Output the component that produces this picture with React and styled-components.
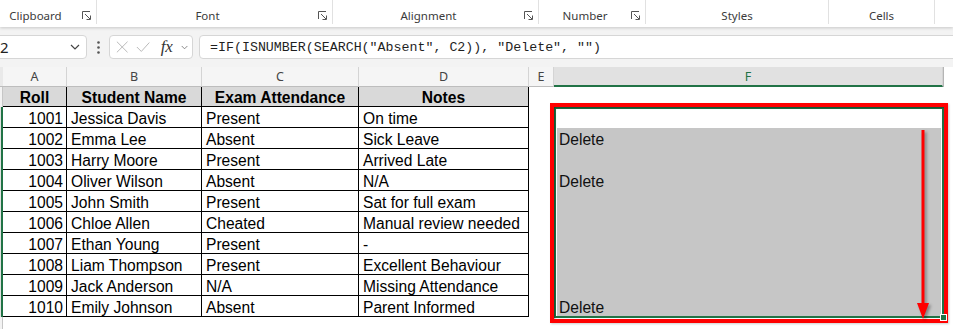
import React from 'react';
import styled, { createGlobalStyle } from 'styled-components';

const GlobalStyle = createGlobalStyle`
  html, body {
    margin: 0;
    padding: 0;
    background: #fff;
    overflow: hidden;
  }
  body {
    font-family: "Liberation Sans", Arial, sans-serif;
  }
`;

const GREEN = '#217346';

const Page = styled.div`
  width: 953px;
  height: 329px;
  display: flex;
  flex-direction: column;
  overflow: hidden;
`;

/* ---------- ribbon ---------- */

const Ribbon = styled.div`
  height: 27px;
  flex-shrink: 0;
  display: flex;
  background: #fff;
  box-shadow: 0 1px 3px rgba(0, 0, 0, 0.18);
  position: relative;
  z-index: 1;
`;

const Group = styled.div`
  width: ${p => p.$w}px;
  margin-left: ${p => p.$offset || 0}px;
  height: 24px;
  flex-shrink: 0;
  display: flex;
  align-items: flex-end;
  box-sizing: border-box;
  border-right: 1px solid #e1e1e1;
`;

const GroupLabel = styled.div`
  flex: 1;
  text-align: center;
  font-family: "Noto Sans", "Open Sans", sans-serif;
  font-size: 11.5px;
  line-height: 14px;
  color: #3b3b3b;
  padding-bottom: 1px;
`;

const Launcher = styled.div`
  width: 14px;
  height: 14px;
  display: flex;
  align-items: center;
  justify-content: flex-start;
  padding-bottom: 2px;
`;

const LauncherIcon = () => (
  <svg width="9" height="9" viewBox="0 0 9 9" fill="none" stroke="#555" strokeWidth="1">
    <path d="M0.5 8 V0.5 H8" />
    <path d="M3 3 L8 8 M8.5 4.5 V8.5 H4.5" />
  </svg>
);

const groups = [
  { label: 'Clipboard', w: 108, offset: -11, launcher: true },
  { label: 'Font', w: 236, launcher: true },
  { label: 'Alignment', w: 206, launcher: true },
  { label: 'Number', w: 107, launcher: true },
  { label: 'Styles', w: 183 },
  { label: 'Cells', w: 106 },
];

/* ---------- formula bar ---------- */

const FormulaArea = styled.div`
  height: 40px;
  flex-shrink: 0;
  background: #f3f3f3;
  display: flex;
  align-items: flex-start;
  padding-top: 8px;
  box-sizing: border-box;
`;

const Field = styled.div`
  height: 24px;
  box-sizing: border-box;
  background: #fff;
  border: 1px solid #d6d6d6;
  border-radius: 4px;
  display: flex;
  align-items: center;
`;

const NameBox = styled(Field)`
  width: 94px;
  margin-left: -7px;
  padding-left: 6px;
  padding-right: 6px;
  justify-content: space-between;
  font-family: "Noto Sans", sans-serif;
  font-size: 15px;
  color: #222;
`;

const Dots = styled.div`
  width: 22px;
  height: 24px;
  display: flex;
  align-items: center;
  justify-content: center;
`;

const FxBox = styled(Field)`
  width: 84px;
  padding: 0 4px 0 6px;
  gap: 8px;
`;

const Fx = styled.span`
  font-family: "Liberation Serif", "DejaVu Serif", serif;
  font-style: italic;
  font-size: 17px;
  color: #333;
  margin-left: 2px;
  line-height: 20px;
`;

const FormulaInput = styled(Field)`
  flex: 1;
  margin-left: 6px;
  margin-right: -10px;
  padding-left: 10px;
  font-family: "Liberation Mono", "DejaVu Sans Mono", monospace;
  font-size: 13.3px;
  color: #1f1f1f;
  white-space: pre;
`;

const Chevron = ({ size = 10, color = '#555' }) => (
  <svg width={size} height={size * 0.6} viewBox="0 0 10 6" fill="none" stroke={color} strokeWidth="1.2">
    <path d="M1 1 L5 5 L9 1" />
  </svg>
);

/* ---------- sheet ---------- */

const colWidths = [64, 135, 157, 170];
const E_WIDTH = 25;
const F_WIDTH = 389;

const HeaderRow = styled.div`
  height: 20px;
  flex-shrink: 0;
  display: flex;
  background: #f3f3f3;
`;

const Corner = styled.div`
  width: 3px;
  flex-shrink: 0;
  background: #e9e9e9;
  border-bottom: 1px solid #bdbdbd;
  box-sizing: border-box;
`;

const ColHead = styled.div`
  width: ${p => p.$w}px;
  flex-shrink: 0;
  box-sizing: border-box;
  display: flex;
  align-items: center;
  justify-content: center;
  font-family: "Noto Sans", "Open Sans", sans-serif;
  font-size: 12.5px;
  color: ${p => (p.$selected ? GREEN : '#444')};
  background: ${p => (p.$selected ? '#e1e1e1' : '#f5f5f5')};
  border-right: 1px solid #d4d4d4;
  border-bottom: ${p => (p.$selected ? `2px solid ${GREEN}` : '1px solid #bdbdbd')};
  padding-top: ${p => (p.$selected ? '1px' : '0')};
`;

const HeadRest = styled.div`
  flex: 1;
  background: #fff;
  border-left: 1px solid #b5b5b5;
`;

const Body = styled.div`
  flex: 1;
  display: flex;
  align-items: flex-start;
`;

const RowStrip = styled.div`
  width: 3px;
  flex-shrink: 0;
  align-self: stretch;
  display: flex;
  flex-direction: column;
`;

const RowHead = styled.div`
  height: ${p => p.$h}px;
  flex: ${p => (p.$fill ? 1 : '0 0 auto')};
  box-sizing: border-box;
  background: ${p => (p.$selected ? '#e1e1e1' : '#f3f3f3')};
  border-right: ${p => (p.$selected ? `2px solid ${GREEN}` : '1px solid #c6c6c6')};
`;

const DataTable = styled.div`
  display: grid;
  grid-template-columns: ${colWidths.map(w => `${w}px`).join(' ')};
  grid-template-rows: 20px repeat(10, 21px);
  flex-shrink: 0;
`;

const Cell = styled.div`
  box-sizing: border-box;
  border-right: 1px solid #000;
  border-bottom: 1px solid #000;
  font-size: 15.6px;
  line-height: 19px;
  color: #000;
  white-space: nowrap;
  overflow: hidden;
  padding: 2px 4px 0 4px;
  text-align: ${p => p.$align || 'left'};
  padding-right: ${p => (p.$align === 'right' ? '3px' : '4px')};
`;

const HeadCell = styled(Cell)`
  background: #d9d9d9;
  font-weight: bold;
  text-align: center;
  padding-top: 1px;
`;

const EmptyCol = styled.div`
  width: ${E_WIDTH}px;
  flex-shrink: 0;
`;

const FColumn = styled.div`
  width: ${F_WIDTH}px;
  flex-shrink: 0;
  display: flex;
  flex-direction: column;
`;

const FTopCell = styled.div`
  height: 20px;
`;

const Selection = styled.div`
  position: relative;
  width: ${F_WIDTH + 1}px;
  box-sizing: border-box;
  border: 2px solid ${GREEN};
  background: #fff;
  padding: 0 1px 0 1px;
  display: flex;
  flex-direction: column;
`;

const ActiveCell = styled.div`
  height: 19px;
`;

const SelCell = styled.div`
  height: ${p => p.$h}px;
  background: #c6c6c6;
  font-size: 15.6px;
  line-height: 19px;
  padding: 2px 0 0 2px;
  box-sizing: border-box;
  color: #111;
`;

const FillHandle = styled.div`
  position: absolute;
  right: -5px;
  bottom: -5px;
  width: 7px;
  height: 7px;
  background: ${GREEN};
  border: 1px solid #fff;
  box-sizing: border-box;
  z-index: 3;
`;

const Highlight = styled.div`
  position: absolute;
  top: -6px;
  left: -6px;
  right: -6px;
  bottom: -7px;
  border: 4px solid #ff0000;
  box-shadow: inset 1px 1px 2px rgba(0, 0, 0, 0.35), 1px 1px 2px rgba(0, 0, 0, 0.2);
  pointer-events: none;
  z-index: 2;
`;

const ArrowSvg = styled.svg`
  position: absolute;
  left: 359px;
  top: 21px;
  overflow: visible;
  filter: drop-shadow(2px 2px 1.5px rgba(0, 0, 0, 0.35));
  z-index: 2;
`;

const DownArrow = () => (
  <ArrowSvg width="16" height="189" viewBox="0 0 16 189">
    <line x1="8" y1="0" x2="8" y2="175" stroke="#ff0000" strokeWidth="3" />
    <polygon points="2,173 14,173 8,189" fill="#ff0000" />
  </ArrowSvg>
);

const rows = [
  [1001, 'Jessica Davis', 'Present', 'On time'],
  [1002, 'Emma Lee', 'Absent', 'Sick Leave'],
  [1003, 'Harry Moore', 'Present', 'Arrived Late'],
  [1004, 'Oliver Wilson', 'Absent', 'N/A'],
  [1005, 'John Smith', 'Present', 'Sat for full exam'],
  [1006, 'Chloe Allen', 'Cheated', 'Manual review needed'],
  [1007, 'Ethan Young', 'Present', '-'],
  [1008, 'Liam Thompson', 'Present', 'Excellent Behaviour'],
  [1009, 'Jack Anderson', 'N/A', 'Missing Attendance'],
  [1010, 'Emily Johnson', 'Absent', 'Parent Informed'],
];

const headers = ['Roll', 'Student Name', 'Exam Attendance', 'Notes'];

export default function App() {
  const results = rows.map(r => (r[2].includes('Absent') ? 'Delete' : ''));

  return (
    <Page>
      <GlobalStyle />
      <Ribbon>
        {groups.map(g => (
          <Group key={g.label} $w={g.w} $offset={g.offset}>
            <GroupLabel>{g.label}</GroupLabel>
            {g.launcher && (
              <Launcher>
                <LauncherIcon />
              </Launcher>
            )}
          </Group>
        ))}
      </Ribbon>

      <FormulaArea>
        <NameBox>
          <span>2</span>
          <Chevron size={10} color="#444" />
        </NameBox>
        <Dots>
          <svg width="3" height="13" viewBox="0 0 3 13" fill="#555">
            <circle cx="1.5" cy="1.5" r="1.3" />
            <circle cx="1.5" cy="6.5" r="1.3" />
            <circle cx="1.5" cy="11.5" r="1.3" />
          </svg>
        </Dots>
        <FxBox>
          <svg width="14" height="14" viewBox="0 0 14 14" stroke="#b8b8b8" strokeWidth="1.1">
            <path d="M1 1 L13 13 M13 1 L1 13" />
          </svg>
          <svg width="16" height="12" viewBox="0 0 16 12" fill="none" stroke="#b8b8b8" strokeWidth="1.1">
            <path d="M1 6 L6 11 L15 1" />
          </svg>
          <Fx>fx</Fx>
          <Chevron size={8} color="#777" />
        </FxBox>
        <FormulaInput>=IF(ISNUMBER(SEARCH("Absent", C2)), "Delete", "")</FormulaInput>
      </FormulaArea>

      <HeaderRow>
        <Corner />
        {['A', 'B', 'C', 'D'].map((l, i) => (
          <ColHead key={l} $w={colWidths[i]}>{l}</ColHead>
        ))}
        <ColHead $w={E_WIDTH}>E</ColHead>
        <ColHead $w={F_WIDTH} $selected>F</ColHead>
        <HeadRest />
      </HeaderRow>

      <Body>
        <RowStrip>
          <RowHead $h={20} />
          {rows.map(r => (
            <RowHead key={r[0]} $h={21} $selected />
          ))}
          <RowHead $fill />
        </RowStrip>

        <DataTable>
          {headers.map(h => (
            <HeadCell key={h}>{h}</HeadCell>
          ))}
          {rows.map(r => (
            <React.Fragment key={r[0]}>
              <Cell $align="right">{r[0]}</Cell>
              <Cell>{r[1]}</Cell>
              <Cell>{r[2]}</Cell>
              <Cell>{r[3]}</Cell>
            </React.Fragment>
          ))}
        </DataTable>

        <EmptyCol />

        <FColumn>
          <FTopCell />
          <Selection>
            <ActiveCell />
            {results.slice(1).map((v, i) => (
              <SelCell key={i} $h={i === results.length - 2 ? 20 : 21}>{v}</SelCell>
            ))}
            <FillHandle />
            <Highlight />
            <DownArrow />
          </Selection>
        </FColumn>
      </Body>
    </Page>
  );
}
